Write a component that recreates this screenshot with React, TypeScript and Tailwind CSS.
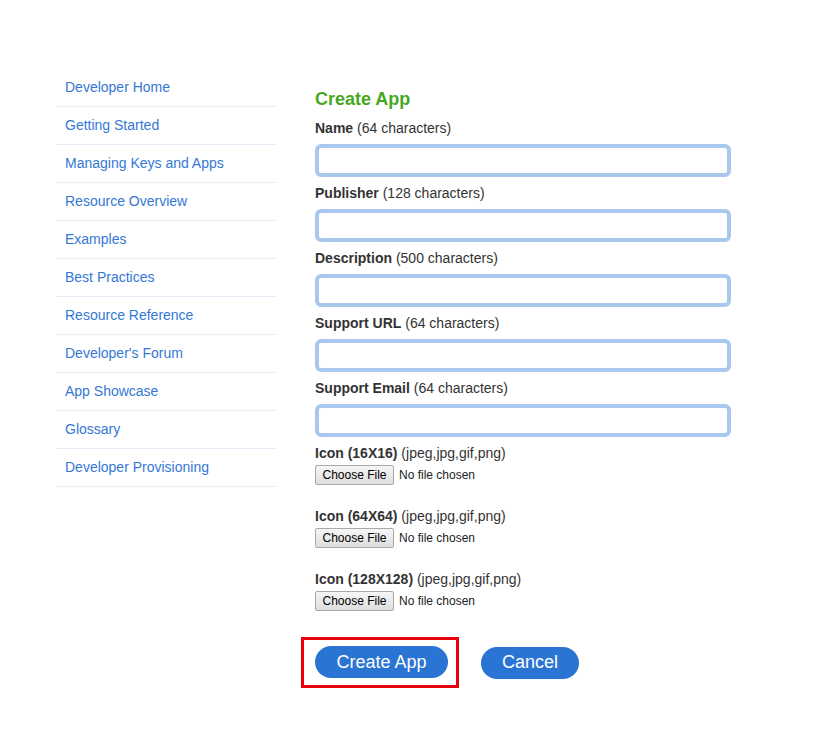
import React from 'react'

const navLinks = [
  'Developer Home',
  'Getting Started',
  'Managing Keys and Apps',
  'Resource Overview',
  'Examples',
  'Best Practices',
  'Resource Reference',
  "Developer's Forum",
  'App Showcase',
  'Glossary',
  'Developer Provisioning',
]

const textFields = [
  { label: 'Name', limit: '(64 characters)' },
  { label: 'Publisher', limit: '(128 characters)' },
  { label: 'Description', limit: '(500 characters)' },
  { label: 'Support URL', limit: '(64 characters)' },
  { label: 'Support Email', limit: '(64 characters)' },
]

const iconFields = ['Icon (16X16)', 'Icon (64X64)', 'Icon (128X128)']

const FilePicker = () => (
  <div className="flex items-center h-[20px] mt-[2px]">
    <span className="h-[20px] w-[79px] flex items-center justify-center rounded-[2px] border border-[#a9a9a9] bg-gradient-to-b from-[#f6f6f6] to-[#dedede] text-[12px] text-black">
      Choose File
    </span>
    <span className="ml-[5px] text-[12px] text-[#222]">No file chosen</span>
  </div>
)

const App = () => {
  return (
    <div className="min-h-[744px] w-full bg-white font-['Liberation_Sans',Arial,sans-serif] text-[14px] text-[#333]">
      <div className="flex pl-[56px] pt-[69px]">
        {/* sidebar */}
        <ul className="w-[220px] shrink-0">
          {navLinks.map((link) => (
            <li
              key={link}
              className="h-[38px] flex items-center pl-[9px] border-b border-[#e6eff9] text-[#3478d6]"
            >
              {link}
            </li>
          ))}
        </ul>

        {/* form */}
        <div className="ml-[39px] w-[416px] pt-[18px]">
          <h1 className="text-[18px] leading-[24px] font-bold text-[#47a81f]">Create App</h1>

          <div className="mt-[7px]">
            {textFields.map((f) => (
              <div key={f.label} className="mb-[6px]">
                <div className="leading-[20px]">
                  <span className="font-bold">{f.label}</span> {f.limit}
                </div>
                <div className="mt-[6px] h-[33px] rounded-[6px] border-[4px] border-[#a9c8ee] bg-white" />
              </div>
            ))}
          </div>

          <div>
            {iconFields.map((label, i) => (
              <div key={label} className={i > 0 ? 'mt-[21px]' : ''}>
                <div className="leading-[20px]">
                  <span className="font-bold">{label}</span> (jpeg,jpg,gif,png)
                </div>
                <FilePicker />
              </div>
            ))}
          </div>

          <div className="flex items-center mt-[26px] -ml-[14px]">
            <div className="border-[3px] border-[#e8000b] pt-[6px] pr-[8px] pb-[7px] pl-[11px]">
              <button className="h-[32px] w-[133px] rounded-full bg-[#2a74d4] text-white text-[18px]">
                Create App
              </button>
            </div>
            <button className="ml-[22px] h-[32px] w-[98px] rounded-full bg-[#2a74d4] text-white text-[18px]">
              Cancel
            </button>
          </div>
        </div>
      </div>
    </div>
  )
}

export default App
